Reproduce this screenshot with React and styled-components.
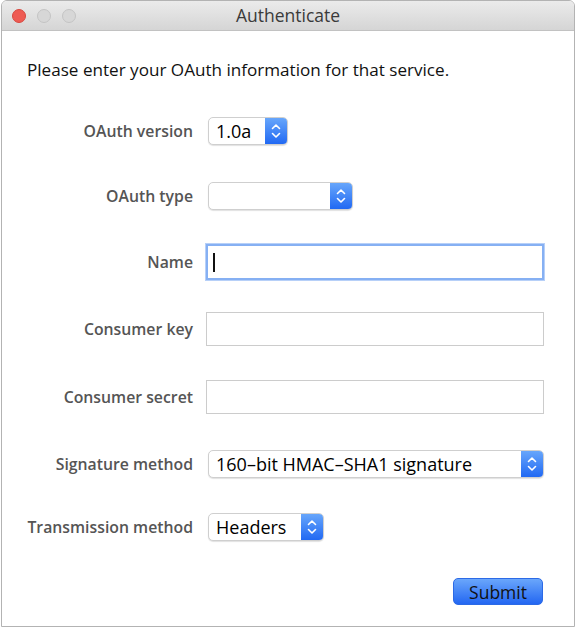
import React from "react";
import styled, { createGlobalStyle } from "styled-components";

const Global = createGlobalStyle`
  html, body { margin: 0; padding: 0; background: #ffffff; }
  body { font-family: "Open Sans", "Noto Sans", "Liberation Sans", sans-serif; }
  * { box-sizing: border-box; }
`;

const Window = styled.div`
  margin: 0 1px;
  width: 574px;
  height: 627px;
  border: 1px solid #b3b3b3;
  border-radius: 6px 6px 0 0;
  background: #ffffff;
  display: flex;
  flex-direction: column;
  overflow: hidden;
`;

const TitleBar = styled.div`
  height: 30px;
  flex: none;
  display: grid;
  grid-template-columns: 1fr auto 1fr;
  align-items: center;
  padding: 0 10px;
  background: linear-gradient(#ebebeb, #d5d5d5);
  border-bottom: 1px solid #c2c2c2;
`;

const Lights = styled.div`
  display: flex;
  gap: 11px;
  align-items: center;
`;

const Light = styled.span`
  width: 14px;
  height: 14px;
  border-radius: 50%;
  background: ${(p) => (p.$red ? "#ee5b53" : "#d7d7d7")};
  border: 1px solid ${(p) => (p.$red ? "#d7483f" : "#c4c4c4")};
`;

const Title = styled.div`
  font-size: 17.5px;
  color: #3a3a3a;
  line-height: 20px;
  margin-top: -1px;
`;

const Content = styled.div`
  flex: 1;
  display: flex;
  flex-direction: column;
  padding: 27px 30px 0 24px;
`;

const Intro = styled.p`
  margin: 0 0 0 1px;
  font-size: 17.1px;
  line-height: 24px;
  color: #111;
`;

const Form = styled.div`
  margin-top: 16px;
  display: grid;
  grid-template-columns: 167px 1fr;
  grid-template-rows: 66px 64px 68px 66px 70px 64px 62px;
  column-gap: 15px;
  align-items: center;
`;

const Label = styled.label`
  justify-self: end;
  font-size: 15.8px;
  font-weight: 600;
  color: #555555;
  white-space: nowrap;
`;

const SelectBox = styled.div`
  width: ${(p) => p.$w}px;
  height: 28px;
  display: flex;
  align-items: stretch;
  background: #fff;
  border: 1px solid #cfcfcf;
  border-radius: 5px;
  box-shadow: 0 1px 1px rgba(0, 0, 0, 0.12);
  overflow: hidden;
`;

const SelectValue = styled.div`
  flex: 1;
  padding-left: 7px;
  font-size: 18px;
  line-height: 26px;
  color: #000;
  white-space: nowrap;
`;

const Stepper = styled.div`
  width: 22px;
  flex: none;
  display: flex;
  align-items: center;
  justify-content: center;
  background: linear-gradient(#67a6fb, #2169f3);
`;

const TextField = styled.div`
  width: 338px;
  height: ${(p) => (p.$focused ? 36 : 34)}px;
  margin-left: -2px;
  display: flex;
  align-items: center;
  padding-left: 5px;
  background: #fff;
  border: ${(p) => (p.$focused ? "2px solid #86b0f3" : "1px solid #cccccc")};
  box-shadow: ${(p) => (p.$focused ? "0 0 0 1px #b7d0f8" : "none")};
`;

const Caret = styled.span`
  width: 1.5px;
  height: 19px;
  background: #111;
`;

const Footer = styled.div`
  display: flex;
  justify-content: flex-end;
  margin-top: 20px;
  padding-right: 1px;
`;

const Button = styled.button`
  width: 90px;
  height: 27px;
  border: 1px solid #2c6ae6;
  border-radius: 5px;
  background: linear-gradient(#6aa6fb, #2367f2);
  font-family: inherit;
  font-size: 17.5px;
  line-height: 24px;
  color: #111;
  padding: 0;
`;

const Chevrons = () => (
  <svg width="10" height="18" viewBox="0 0 10 18" fill="none">
    <path d="M1.5 6.5 L5 3 L8.5 6.5" stroke="#fff" strokeWidth="1.6" strokeLinecap="round" strokeLinejoin="round" />
    <path d="M1.5 11.5 L5 15 L8.5 11.5" stroke="#fff" strokeWidth="1.6" strokeLinecap="round" strokeLinejoin="round" />
  </svg>
);

const Select = ({ w, value }) => (
  <SelectBox $w={w}>
    <SelectValue>{value}</SelectValue>
    <Stepper>
      <Chevrons />
    </Stepper>
  </SelectBox>
);

export default function App() {
  return (
    <>
      <Global />
      <Window>
        <TitleBar>
          <Lights>
            <Light $red />
            <Light />
            <Light />
          </Lights>
          <Title>Authenticate</Title>
          <span />
        </TitleBar>
        <Content>
          <Intro>Please enter your OAuth information for that service.</Intro>
          <Form>
            <Label>OAuth version</Label>
            <Select w={80} value="1.0a" />
            <Label>OAuth type</Label>
            <Select w={145} value="" />
            <Label>Name</Label>
            <TextField $focused>
              <Caret />
            </TextField>
            <Label>Consumer key</Label>
            <TextField />
            <Label>Consumer secret</Label>
            <TextField />
            <Label>Signature method</Label>
            <Select w={336} value="160–bit HMAC–SHA1 signature" />
            <Label>Transmission method</Label>
            <Select w={116} value="Headers" />
          </Form>
          <Footer>
            <Button>Submit</Button>
          </Footer>
        </Content>
      </Window>
    </>
  );
}
